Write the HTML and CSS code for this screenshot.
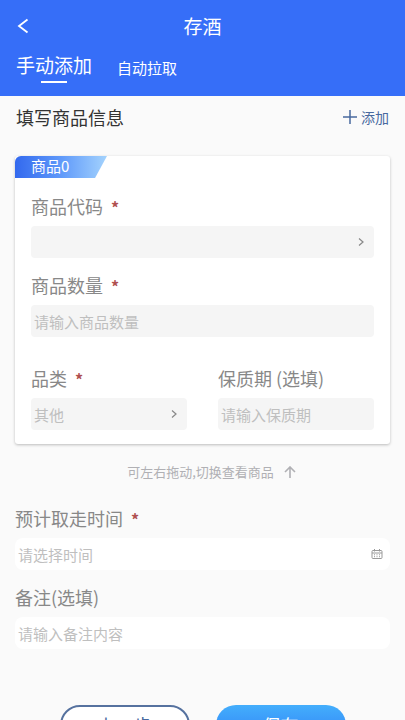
FILE: index.html
```html
<!DOCTYPE html>
<html lang="zh-CN">
<head>
    <meta charset="UTF-8">
    <meta name="viewport" content="width=device-width, initial-scale=1.0">
    <title>存酒</title>
    <link rel="stylesheet" href="styles.css">
</head>
<body>
    <header class="header">
        <div class="nav-bar">
            <button class="btn-back" type="button" aria-label="返回">
                <svg width="12" height="16" viewBox="0 0 12 16" fill="none" stroke="currentColor" stroke-width="1.8"><path d="M10.5 1.5 2 8l8.500 6.5"/></svg>
            </button>
            <h1>存酒</h1>
        </div>
        <nav class="tabs">
            <a class="tab active" href="#manual">手动添加</a>
            <a class="tab" href="#auto">自动拉取</a>
        </nav>
    </header>

    <main class="container">
        <div class="section-head">
            <h2>填写商品信息</h2>
            <button class="btn-add" type="button">
                <svg width="14" height="14" viewBox="0 0 14 14" stroke="currentColor" stroke-width="1.5"><path d="M7 0v14M0 7h14"/></svg>
                添加
            </button>
        </div>

        <form>
            <section class="card">
                <div class="card-tag">商品0</div>
                <div class="card-body">
                    <div class="form-group">
                        <label for="code">商品代码<span class="required">*</span></label>
                        <div class="field">
                            <select id="code"><option></option></select>
                            <svg class="chevron" width="6" height="10" viewBox="0 0 6 10" fill="none" stroke="currentColor" stroke-width="1.2"><path d="m1 1.5 4 3.5-4 3.5"/></svg>
                        </div>
                    </div>
                    <div class="form-group">
                        <label for="count">商品数量<span class="required">*</span></label>
                        <div class="field">
                            <input type="text" id="count" placeholder="请输入商品数量">
                        </div>
                    </div>
                    <div class="form-row">
                        <div class="form-group">
                            <label for="category">品类<span class="required">*</span></label>
                            <div class="field">
                                <select id="category"><option>其他</option></select>
                                <svg class="chevron" width="6" height="10" viewBox="0 0 6 10" fill="none" stroke="currentColor" stroke-width="1.2"><path d="m1 1.5 4 3.5-4 3.5"/></svg>
                            </div>
                        </div>
                        <div class="form-group">
                            <label for="expiry">保质期 (选填)</label>
                            <div class="field">
                                <input type="text" id="expiry" placeholder="请输入保质期">
                            </div>
                        </div>
                    </div>
                </div>
            </section>

            <p class="hint">
                可左右拖动,切换查看商品
                <svg width="12" height="12" viewBox="0 0 12 12" fill="none" stroke="currentColor" stroke-width="1.6"><path d="M6 12V1M1 6l5-5 5 5"/></svg>
            </p>

            <div class="form-group">
                <label for="takeTime">预计取走时间<span class="required">*</span></label>
                <div class="field field-white">
                    <input type="text" id="takeTime" placeholder="请选择时间">
                    <button class="btn-date" type="button" aria-label="选择时间">
                        <svg width="12" height="10" viewBox="0 0 12 10" fill="none" stroke="currentColor"><rect x="1" y="1.5" width="10" height="8" rx="1"/><path d="M3.5 0v2.5M8.5 0v2.5M1 4h10"/><path d="M3 5.8h6M3 7.7h6" stroke-dasharray="1 1.5"/></svg>
                    </button>
                </div>
            </div>
            <div class="form-group">
                <label for="remark">备注(选填)</label>
                <div class="field field-white">
                    <input type="text" id="remark" placeholder="请输入备注内容">
                </div>
            </div>

            <div class="actions">
                <button class="btn btn-outline" type="button">上一步</button>
                <button class="btn btn-primary" type="submit">保存</button>
            </div>
        </form>
    </main>
</body>
</html>
```
FILE: styles.css
```css
* {
    box-sizing: border-box;
}
html {
    scrollbar-width: none;
}
body {
    margin: 0;
    font-family: "Noto Sans CJK SC", sans-serif;
    font-size: 15px;
    background-color: #fafafa;
}
h1, h2, p {
    margin: 0;
    font-weight: 400;
}
button, input, select {
    font-family: inherit;
    padding: 0;
    border: none;
    background: none;
}
button {
    cursor: pointer;
}
svg {
    flex: none;
}
.header {
    background-color: #366ef8;
    color: white;
    padding: 12px 16px;
}
.nav-bar {
    display: grid;
    grid-template-columns: 1fr auto 1fr;
    align-items: center;
}
.nav-bar h1 {
    font-size: 19px;
    line-height: 28px;
}
.btn-back {
    display: flex;
    justify-self: start;
    color: white;
    padding: 4px 1px;
}
.tabs {
    display: flex;
    align-items: flex-end;
    gap: 25px;
    margin-top: 12px;
}
.tab {
    color: white;
    font-size: 15px;
    line-height: 20px;
    padding-bottom: 6px;
    text-decoration: none;
}
.tab.active {
    font-size: 19px;
    line-height: 26px;
    padding-bottom: 0;
}
.tab.active::after {
    content: "";
    display: block;
    width: 26px;
    height: 2px;
    margin: 3px auto 1px;
    background-color: white;
}
.container {
    padding: 0 15px 30px;
}
.section-head {
    display: flex;
    justify-content: space-between;
    align-items: center;
    padding: 7px 1px 25px;
}
.section-head h2 {
    font-size: 18px;
    line-height: 28px;
    color: #333;
}
.btn-add {
    display: flex;
    align-items: center;
    gap: 4px;
    color: #48699f;
    font-size: 14px;
}
.card {
    background-color: white;
    border-radius: 3px;
    box-shadow: 0 1px 3px rgba(0,0,0,0.25);
}
.card-tag {
    width: 92px;
    height: 22px;
    padding-left: 16px;
    color: white;
    font-size: 15px;
    line-height: 20px;
    background: linear-gradient(90deg, #3369ee, #5f99fa 50%, #a4d3fd);
    border-top-left-radius: 6px;
    clip-path: polygon(0 0, 100% 0, 87% 100%, 0 100%);
}
.card-body {
    padding: 16px 16px 14px;
}
.form-group {
    margin-bottom: 15px;
}
.form-group label {
    display: block;
    margin-bottom: 8px;
    font-size: 18px;
    line-height: 24px;
    color: #888;
}
.required {
    margin-left: 8px;
    font-size: 16px;
    font-weight: 700;
    line-height: 1;
    color: #b05050;
}
.field {
    display: flex;
    align-items: center;
    height: 32px;
    padding: 0 10px 0 3px;
    background-color: #f5f5f5;
    border-radius: 4px;
}
.field-white {
    padding-right: 7px;
    background-color: white;
    border-radius: 8px;
}
.field input,
.field select {
    flex: 1;
    min-width: 0;
    height: 100%;
    font-size: 15px;
    color: #bfbfbf;
    appearance: none;
    outline: none;
}
.field input::placeholder {
    color: #bfbfbf;
}
.chevron {
    color: #888;
}
.btn-date {
    display: flex;
    color: #999;
}
.form-row {
    display: grid;
    grid-template-columns: repeat(2, minmax(0, 1fr));
    gap: 31px;
    margin-top: 29px;
}
.form-row .form-group {
    margin-bottom: 0;
}
.hint {
    display: flex;
    justify-content: center;
    align-items: center;
    gap: 10px;
    margin: 18px 0 24px;
    padding-left: 18px;
    font-size: 13px;
    line-height: 20px;
    color: #b0b0b4;
}
.actions {
    display: flex;
    justify-content: center;
    gap: 26px;
    padding-top: 41px;
}
.btn {
    width: 130px;
    height: 40px;
    border-radius: 20px;
    font-size: 18px;
}
.btn-outline {
    border: 2px solid #56729f;
    color: #48699f;
    background-color: white;
}
.btn-primary {
    color: white;
    background: linear-gradient(#43aefc, #2f7cf6);
}
```
